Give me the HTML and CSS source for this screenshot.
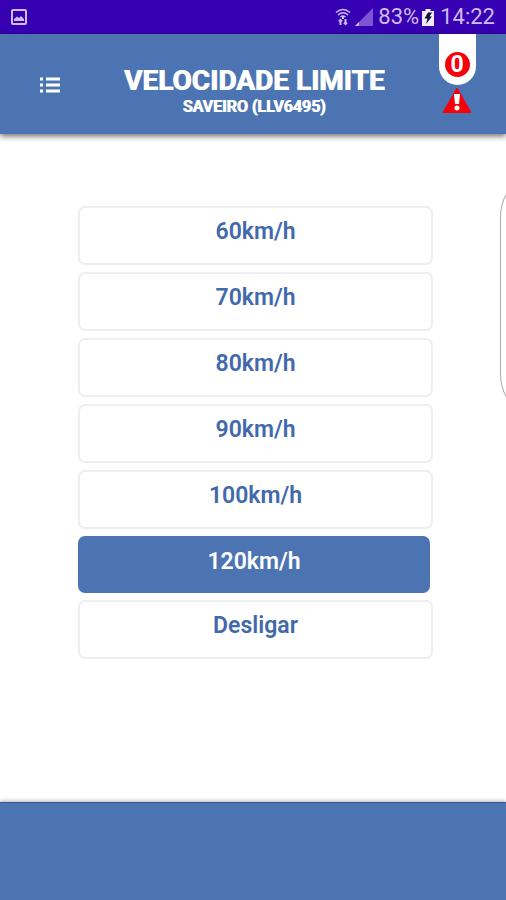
FILE: index.html
```html
<!DOCTYPE html>
<html lang="pt-BR">
<head>
<meta charset="utf-8">
<meta name="viewport" content="width=device-width, initial-scale=1">
<title>Velocidade Limite</title>
<link rel="stylesheet" href="styles.css">
</head>
<body>
<div class="status">
  <svg class="status-picture" width="16" height="16" viewBox="0 0 16 16" aria-hidden="true">
    <rect x="1" y="1" width="14" height="14" rx="1" fill="none" stroke="currentColor" stroke-width="2"/>
    <path d="M3 12V10L6 7.500L8 9L10 7L13 10V12Z" fill="currentColor"/>
  </svg>
  <svg width="16" height="18" viewBox="0 0 16 18" aria-hidden="true">
    <path d="M1 4.500Q8-1.500 15 4.500M3 7Q8 2.500 13 7M5.500 9Q8 7 10.500 9" fill="none" stroke="currentColor" stroke-width="1.500"/>
    <path d="M8 8V11" stroke="currentColor" stroke-width="2"/>
    <path d="M5.500 17V12M4 13.500L5.500 12L7 13.500M10.500 11V16M9 14.500L10.500 16L12 14.500" fill="none" stroke="currentColor" stroke-width="2"/>
  </svg>
  <svg class="status-signal" width="18" height="18" viewBox="0 0 18 18" aria-hidden="true">
    <path d="M0 18L18 0V18Z" fill="#7d55d2"/>
    <path d="M0 18L4 14V18Z" fill="currentColor"/>
  </svg>
  <span>83%</span>
  <svg class="status-battery" width="12" height="17" viewBox="0 0 12 17" aria-hidden="true">
    <path d="M3.500 0H8.500V2H12V17H0V2H3.500Z" fill="#f1e9ff"/>
    <path d="M6 3.500H10L7.500 7.500H10L4 15L5.500 9.500H2.500Z" fill="#16102c"/>
  </svg>
  <time>14:22</time>
</div>
<header class="header">
  <button class="menu" type="button" aria-label="Menu">
    <svg width="20" height="16" viewBox="0 0 20 16" aria-hidden="true">
      <path d="M0 2H3M0 8H3M0 14H3M6 2H20M6 8H20M6 14H20" stroke="currentColor" stroke-width="3"/>
    </svg>
  </button>
  <div class="heading">
    <h1>VELOCIDADE LIMITE</h1>
    <p>SAVEIRO (LLV6495)</p>
  </div>
  <div class="alerts">
    <div class="alert-tab"><span class="alert-count">0</span></div>
    <svg width="30" height="26" viewBox="0 0 30 26" aria-hidden="true">
      <path d="M15 1L29 25.500H1Z" fill="#f80009" stroke="#f80009" stroke-linejoin="round"/>
      <path d="M12 7H18L17 17H13Z" fill="#fff"/>
      <circle cx="15" cy="21" r="2.500" fill="#fff"/>
    </svg>
  </div>
</header>
<main class="main">
  <div class="options">
    <button class="option" type="button">60km/h</button>
    <button class="option" type="button">70km/h</button>
    <button class="option" type="button">80km/h</button>
    <button class="option" type="button">90km/h</button>
    <button class="option" type="button">100km/h</button>
    <button class="option option-selected" type="button" aria-pressed="true">120km/h</button>
    <button class="option" type="button">Desligar</button>
  </div>
  <div class="edge-handle"></div>
</main>
<footer class="footer"></footer>
</body>
</html>
```
FILE: styles.css
```css
* {
  box-sizing: border-box;
}

body {
  margin: 0;
  min-height: 100vh;
  display: flex;
  flex-direction: column;
  background: #fff;
  font-family: Roboto, "Liberation Sans", sans-serif;
}

svg {
  display: block;
  flex: none;
}

.status {
  display: flex;
  align-items: center;
  height: 34px;
  padding: 0 11px;
  background: #3700b3;
  color: #cdbdf2;
  font-size: 22px;
  line-height: 36px;
}

.status-picture {
  margin-right: auto;
}

.status-signal {
  margin: 0 5px 0 4px;
}

.status-battery {
  margin: 0 6px 0 3px;
}

.header {
  position: relative;
  z-index: 1;
  display: flex;
  height: 100px;
  background: #4c74b2;
  box-shadow: 0 2px 6px rgba(0, 0, 0, 0.6);
  color: #fff;
}

.menu {
  display: flex;
  align-items: center;
  justify-content: center;
  width: 100px;
  padding: 2px 0 0;
  border: 0;
  background: none;
  color: inherit;
}

.heading {
  flex: 1;
  padding-top: 31px;
  text-align: center;
  text-shadow: 1px 0 0 #fff;
  white-space: nowrap;
}

.heading h1 {
  margin: 0;
  font-size: 28px;
  font-weight: 700;
  line-height: 32px;
}

.heading p {
  margin: 0;
  font-size: 16px;
  font-weight: 600;
  line-height: 20px;
}

.alerts {
  display: flex;
  flex-direction: column;
  align-items: center;
  gap: 2px;
  width: 98px;
}

.alert-tab {
  display: flex;
  align-items: flex-end;
  width: 37px;
  height: 51px;
  padding: 0 6px 8px;
  border-radius: 0 0 19px 19px;
  background: #fff;
}

.alert-count {
  width: 25px;
  height: 25px;
  border-radius: 50%;
  background: #f80009;
  font-size: 23px;
  font-weight: 700;
  line-height: 25px;
  text-align: center;
}

.main {
  position: relative;
  flex: 1;
  padding: 72px 73px 72px 78px;
  overflow: hidden;
}

.options {
  display: flex;
  flex-direction: column;
  gap: 7px;
}

.option {
  display: flex;
  justify-content: center;
  height: 59px;
  padding: 10px 0 0;
  border: 2px solid #eeeef0;
  border-radius: 7px;
  background: #fff;
  color: #4169ab;
  font-family: inherit;
  font-size: 23px;
  font-weight: 600;
  line-height: 28px;
}

.option-selected {
  height: 57px;
  margin-right: 3px;
  border-color: #4c74b2;
  background: #4c74b2;
  color: #fff;
}

.edge-handle {
  position: absolute;
  top: 51px;
  right: -34px;
  width: 40px;
  height: 221px;
  border: 1px solid #aaa;
  border-radius: 20px / 32px;
}

.footer {
  position: relative;
  height: 98px;
  border-top: 1px solid #2f5b9f;
  background: #4c74b2;
  box-shadow: 0 -1px 4px rgba(0, 0, 0, 0.3);
}
```
